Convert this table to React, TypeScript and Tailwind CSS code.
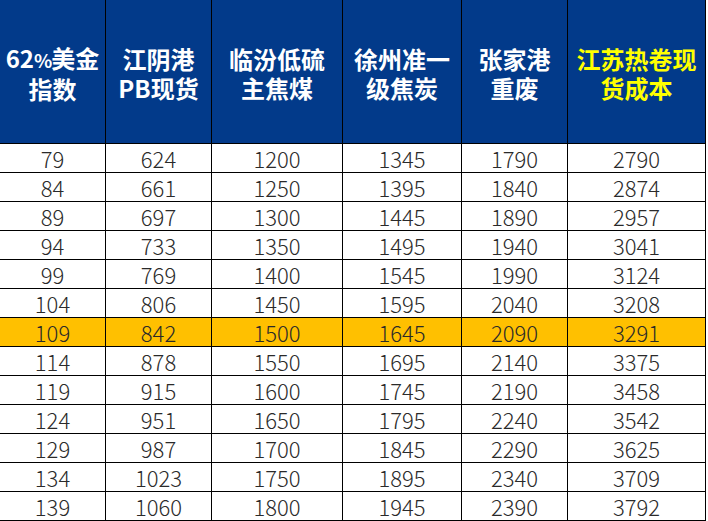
const headers: { lines: string[]; yellow?: boolean }[] = [
  { lines: ['62%美金', '指数'] },
  { lines: ['江阴港', 'PB现货'] },
  { lines: ['临汾低硫', '主焦煤'] },
  { lines: ['徐州准一', '级焦炭'] },
  { lines: ['张家港', '重废'] },
  { lines: ['江苏热卷现', '货成本'], yellow: true },
];

const rows: number[][] = [
  [79, 624, 1200, 1345, 1790, 2790],
  [84, 661, 1250, 1395, 1840, 2874],
  [89, 697, 1300, 1445, 1890, 2957],
  [94, 733, 1350, 1495, 1940, 3041],
  [99, 769, 1400, 1545, 1990, 3124],
  [104, 806, 1450, 1595, 2040, 3208],
  [109, 842, 1500, 1645, 2090, 3291],
  [114, 878, 1550, 1695, 2140, 3375],
  [119, 915, 1600, 1745, 2190, 3458],
  [124, 951, 1650, 1795, 2240, 3542],
  [129, 987, 1700, 1845, 2290, 3625],
  [134, 1023, 1750, 1895, 2340, 3709],
  [139, 1060, 1800, 1945, 2390, 3792],
];

const font = { fontFamily: '"Noto Sans CJK SC", "Noto Sans", sans-serif' };

// "62%" has a narrow percent sign in the reference
const renderLine = (l: string) =>
  l.includes('%') ? <>{l.split('%')[0]}<span className="text-[19px] tracking-[-1px]">%</span>{l.split('%')[1]}</> : l;

export default function App() {
  return (
    <div className="w-[708px] h-[521px] bg-white overflow-hidden" style={font}>
      <div className="grid grid-cols-[106px_106px_131px_119px_106px_138px] w-[706px]">
        {headers.map((h, i) => (
          <div key={i} className="h-[144px] bg-[#023a8a] border-r border-b border-black flex items-center justify-center pt-[3px]">
            <p className={`text-center whitespace-nowrap text-[24px] leading-[29px] font-bold ${h.yellow ? 'text-[#ffff00]' : 'text-white'}`}>
              {renderLine(h.lines[0])}<br />{h.lines[1]}
            </p>
          </div>
        ))}
        {rows.map((r, ri) => r.map((v, ci) => (
          <div key={`${ri}-${ci}`}
            className={`h-[29px] border-r border-b border-black flex items-center justify-center text-[22px] leading-none font-light text-[#2a2a2a] ${ri === 6 ? 'bg-[#ffc000]' : 'bg-white'}`}>
            {v}
          </div>
        )))}
      </div>
    </div>
  );
}
